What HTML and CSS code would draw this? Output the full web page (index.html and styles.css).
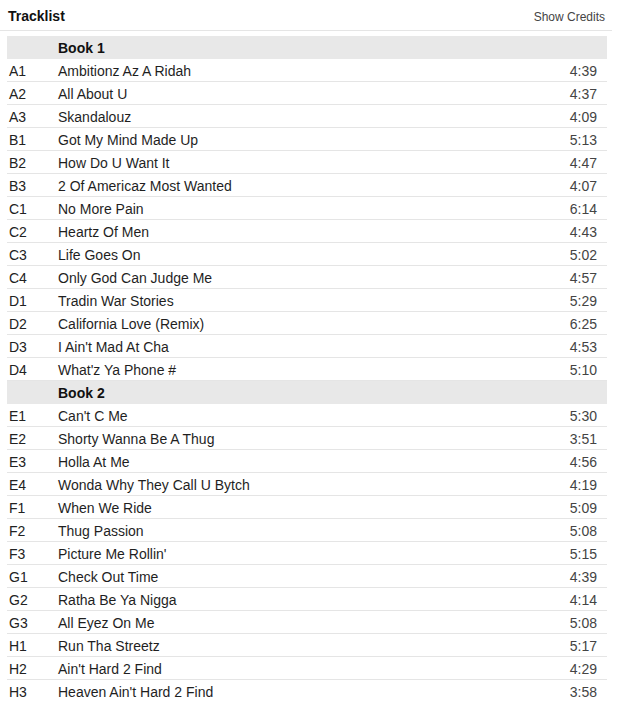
FILE: index.html
```html
<!DOCTYPE html>
<html>
<head>
<meta charset="utf-8">
<link rel="stylesheet" href="styles.css">
</head>
<body>
<section class="tracklist">
  <header class="tl-head">
    <h2 class="tl-title">Tracklist</h2>
    <span class="tl-credits">Show Credits</span>
  </header>
  <table class="tl-table">
    <tbody>
      <tr class="heading"><td class="pos"></td><td class="title">Book 1</td><td class="dur"></td></tr>
      <tr><td class="pos">A1</td><td class="title">Ambitionz Az A Ridah</td><td class="dur">4:39</td></tr>
      <tr><td class="pos">A2</td><td class="title">All About U</td><td class="dur">4:37</td></tr>
      <tr><td class="pos">A3</td><td class="title">Skandalouz</td><td class="dur">4:09</td></tr>
      <tr><td class="pos">B1</td><td class="title">Got My Mind Made Up</td><td class="dur">5:13</td></tr>
      <tr><td class="pos">B2</td><td class="title">How Do U Want It</td><td class="dur">4:47</td></tr>
      <tr><td class="pos">B3</td><td class="title">2 Of Americaz Most Wanted</td><td class="dur">4:07</td></tr>
      <tr><td class="pos">C1</td><td class="title">No More Pain</td><td class="dur">6:14</td></tr>
      <tr><td class="pos">C2</td><td class="title">Heartz Of Men</td><td class="dur">4:43</td></tr>
      <tr><td class="pos">C3</td><td class="title">Life Goes On</td><td class="dur">5:02</td></tr>
      <tr><td class="pos">C4</td><td class="title">Only God Can Judge Me</td><td class="dur">4:57</td></tr>
      <tr><td class="pos">D1</td><td class="title">Tradin War Stories</td><td class="dur">5:29</td></tr>
      <tr><td class="pos">D2</td><td class="title">California Love (Remix)</td><td class="dur">6:25</td></tr>
      <tr><td class="pos">D3</td><td class="title">I Ain't Mad At Cha</td><td class="dur">4:53</td></tr>
      <tr><td class="pos">D4</td><td class="title">What'z Ya Phone #</td><td class="dur">5:10</td></tr>
      <tr class="heading"><td class="pos"></td><td class="title">Book 2</td><td class="dur"></td></tr>
      <tr><td class="pos">E1</td><td class="title">Can't C Me</td><td class="dur">5:30</td></tr>
      <tr><td class="pos">E2</td><td class="title">Shorty Wanna Be A Thug</td><td class="dur">3:51</td></tr>
      <tr><td class="pos">E3</td><td class="title">Holla At Me</td><td class="dur">4:56</td></tr>
      <tr><td class="pos">E4</td><td class="title">Wonda Why They Call U Bytch</td><td class="dur">4:19</td></tr>
      <tr><td class="pos">F1</td><td class="title">When We Ride</td><td class="dur">5:09</td></tr>
      <tr><td class="pos">F2</td><td class="title">Thug Passion</td><td class="dur">5:08</td></tr>
      <tr><td class="pos">F3</td><td class="title">Picture Me Rollin'</td><td class="dur">5:15</td></tr>
      <tr><td class="pos">G1</td><td class="title">Check Out Time</td><td class="dur">4:39</td></tr>
      <tr><td class="pos">G2</td><td class="title">Ratha Be Ya Nigga</td><td class="dur">4:14</td></tr>
      <tr><td class="pos">G3</td><td class="title">All Eyez On Me</td><td class="dur">5:08</td></tr>
      <tr><td class="pos">H1</td><td class="title">Run Tha Streetz</td><td class="dur">5:17</td></tr>
      <tr><td class="pos">H2</td><td class="title">Ain't Hard 2 Find</td><td class="dur">4:29</td></tr>
      <tr><td class="pos">H3</td><td class="title">Heaven Ain't Hard 2 Find</td><td class="dur">3:58</td></tr>
    </tbody>
  </table>
</section>
</body>
</html>
```

FILE: styles.css
```css
html, body {
  margin: 0;
  padding: 0;
  background: #fff;
}
body {
  font-family: "Liberation Sans", Arial, sans-serif;
  color: #1f1f1f;
}
.tracklist {
  width: 612px;
}
.tl-head {
  display: flex;
  justify-content: space-between;
  align-items: baseline;
  height: 31px;
  box-sizing: border-box;
  padding: 8px 7px 0 8px;
  border-bottom: 1px solid #e5e5e5;
}
.tl-title {
  margin: 0;
  font-size: 14px;
  font-weight: bold;
  color: #111;
}
.tl-credits {
  font-size: 12px;
  color: #444;
}
.tl-table {
  margin: 5px 0 0 7px;
  width: 600px;
  border-collapse: collapse;
  font-size: 14px;
}
.tl-table td {
  height: 21px;
  padding: 1px 0 0 0;
  border-bottom: 1px solid #e5e5e5;
  vertical-align: middle;
}
.tl-table tr:last-child td {
  border-bottom: none;
}
.tl-table .heading td {
  background: #e8e8e8;
  font-weight: bold;
  color: #111;
  border-bottom: none;
  height: 22px;
}
.tl-table .pos {
  width: 49px;
  padding-left: 2px;
  color: #222;
}
.tl-table .dur {
  text-align: right;
  padding-right: 10px;
  color: #444;
}
```
